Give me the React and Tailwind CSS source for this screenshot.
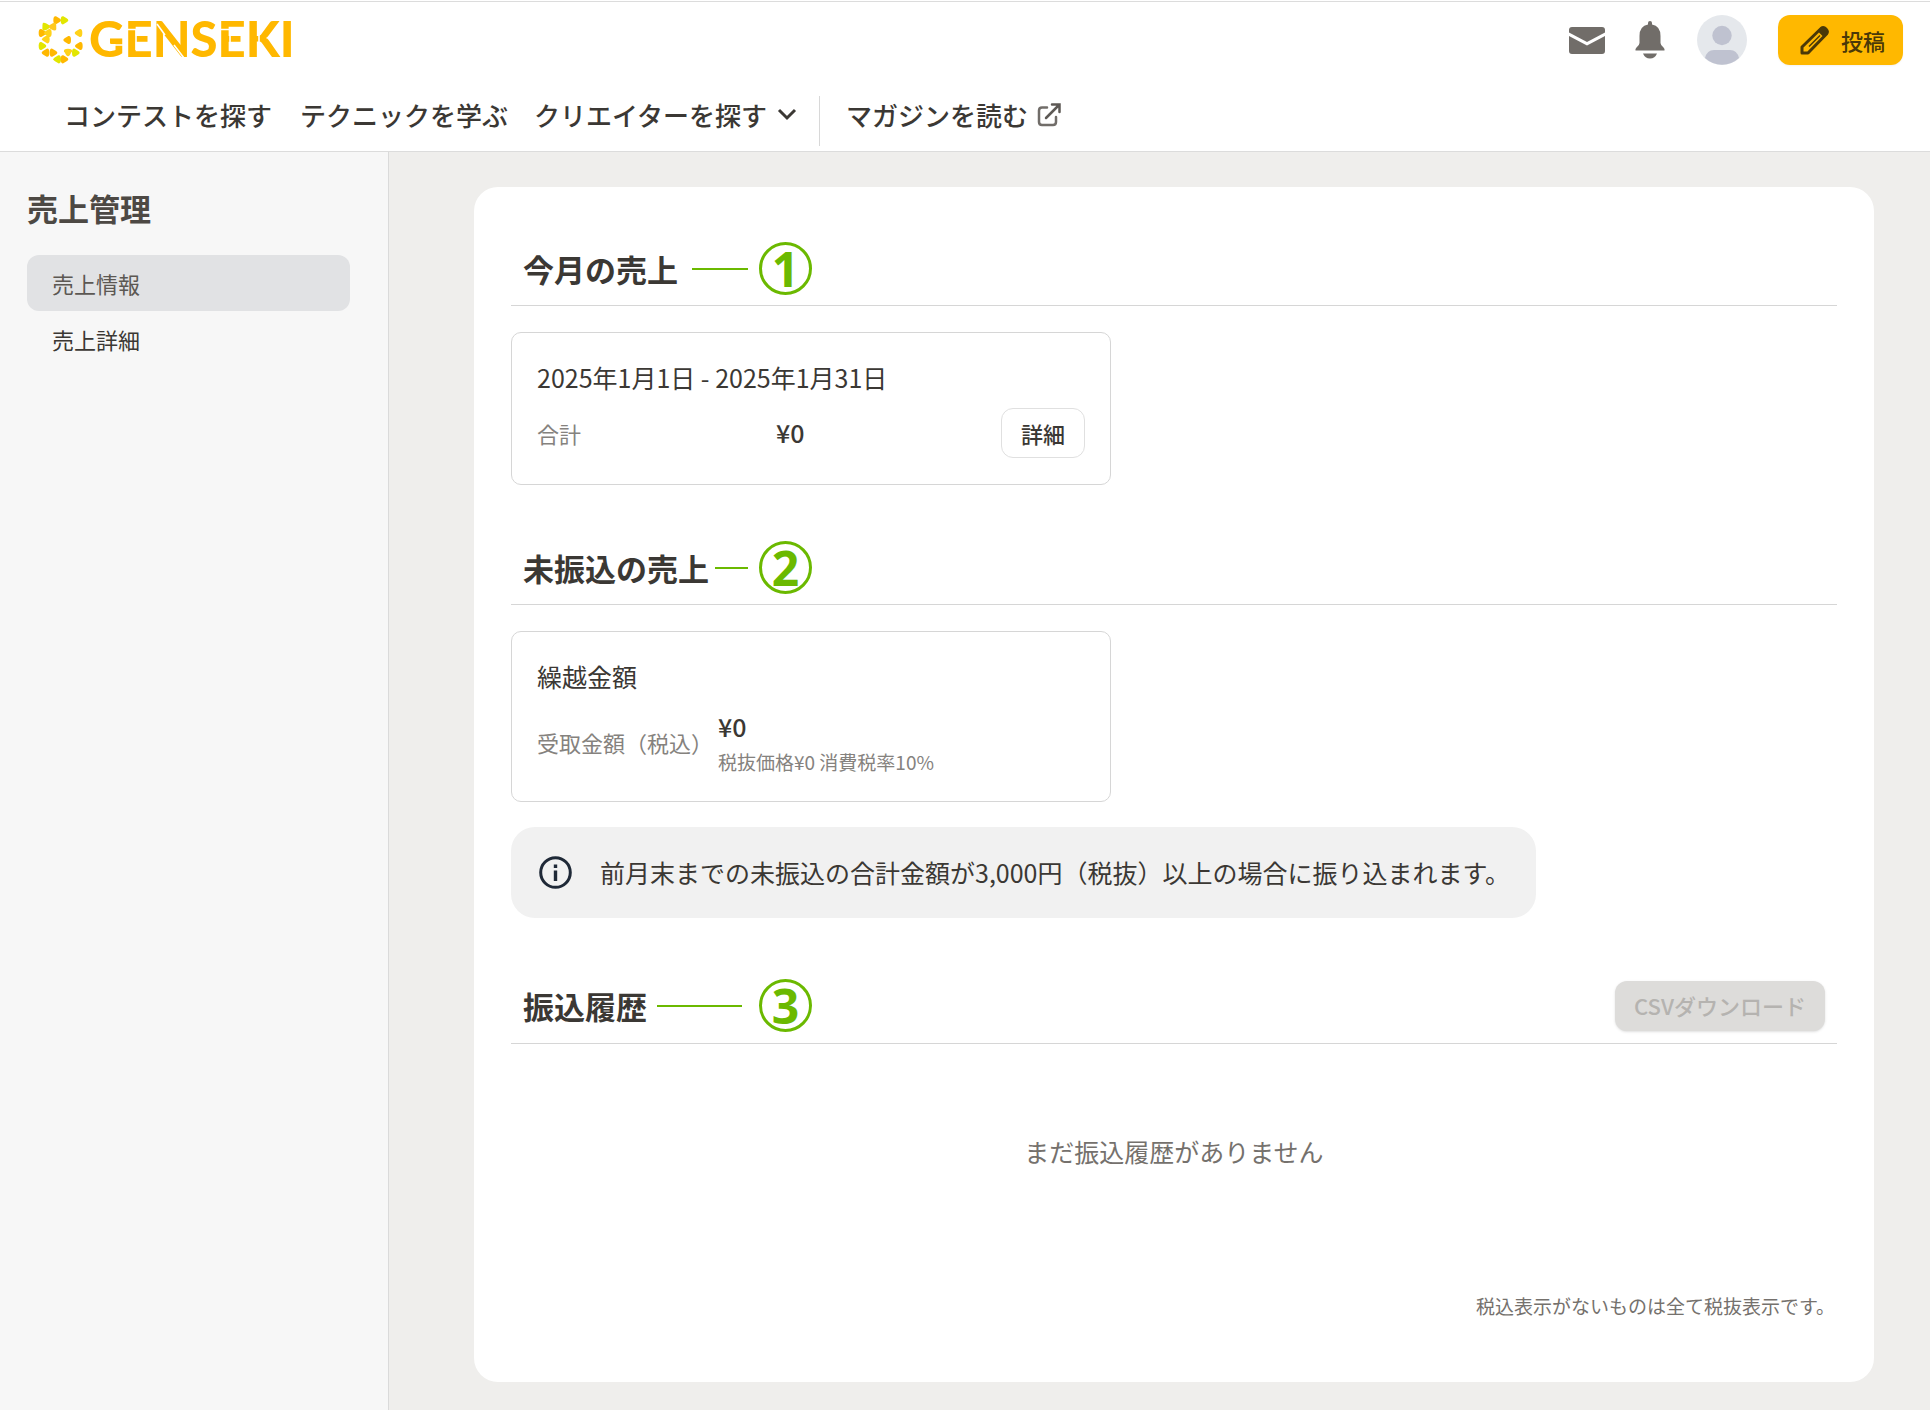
import React from "react";

const petals = [
  [111, 61, 180, "#ffb800"],
  [133, 61, 180, "#e2e600"],
  [76, 79, 60, "#e2e600"],
  [100, 79, 120, "#ffc91f"],
  [67, 99, 180, "#ffb800"],
  [84, 99, 0, "#ffd21a"],
  [67, 138, 180, "#e2e600"],
  [78, 118, 0, "#ffd21a"],
  [77, 158, 0, "#ffb800"],
  [100, 158, 180, "#ffb800"],
  [112, 178, 0, "#e2e600"],
  [133, 178, 180, "#ffb800"],
  [144, 157, 270, "#ffd21a"],
  [167, 158, 180, "#e2e600"],
  [177, 138, 0, "#ffb800"],
  [142, 120, 0, "#ffb800"],
  [176, 99, 0, "#ffd21a"],
];

function Logo() {
  return (
    <a href="#" aria-label="GENSEKI" className="block">
      <svg viewBox="0 -13 256 68" className="block h-[68px] w-[256px]">
        <g transform="translate(-18 -15) scale(0.3333)">
          {petals.map(([x, y, r, fill], i) => (
            <path
              key={i}
              transform={`translate(${x} ${y}) rotate(${r})`}
              d="M-12 0Q-12 -3 -7 -6L3 -12Q11 -14 11 0Q11 14 3 12L-7 6Q-12 3 -12 0Z"
              fill={fill}
            />
          ))}
        </g>
        <text x="51" y="42" fontFamily="Lato" fontWeight="900" fontSize="49" fill="#ffb800">
          GENSEKI
        </text>
        <path
          d="M87 14.500H98V35M181 14.500H192V35M119 9L127 20M136 30L146 43M221 6V43M76 30H87"
          fill="none"
          stroke="#fff"
          strokeWidth="1.600"
        />
      </svg>
    </a>
  );
}

function Callout({ number, lineClass }) {
  return (
    <>
      <span className={`h-[2px] flex-1 bg-[#6bb900] ${lineClass}`} />
      <span className="flex size-[53px] items-center justify-center rounded-full border-3 border-[#6bb900] font-['Open_Sans',sans-serif] text-5xl leading-none font-bold text-[#6bb900]">
        {number}
      </span>
    </>
  );
}

function SectionHeader({ title, number, lineClass, className, children }) {
  return (
    <div className={`flex items-center justify-between border-b border-[#d6d6d6] px-3 ${className}`}>
      <div className="flex w-[289px] items-center">
        <h2 className="text-[31px] leading-10 font-bold whitespace-nowrap">{title}</h2>
        <Callout number={number} lineClass={lineClass} />
      </div>
      {children}
    </div>
  );
}

export default function App() {
  return (
    <div className="flex min-h-[1410px] flex-col bg-white pt-px font-['Noto_Sans_CJK_JP',sans-serif] text-[#3b3834]">
      <header className="border-y border-[#dcdcdc]">
        <div className="flex items-start justify-between pr-[27px] pl-[38px]">
          <Logo />
          <div className="flex items-center pt-[13px]">
            <button aria-label="メッセージ" className="mr-[30px]">
              <svg viewBox="0 0 36 27" className="block h-[27px] w-9" fill="#716d69">
                <path d="M3 0H33Q36 0 36 3V5.500L18 15 0 5.500V3Q0 0 3 0Z" />
                <path d="M0 9L18 18.500 36 9V24Q36 27 33 27H3Q0 27 0 24Z" />
              </svg>
            </button>
            <button aria-label="お知らせ" className="mr-8">
              <svg viewBox="0 0 30 38" className="block h-[38px] w-[30px]" fill="#716d69">
                <path d="M15 0Q17 0 17 2V3.500Q25.500 5 25.500 15V22Q25.500 24 28.500 26.500Q30 28 29.500 29.500H.5Q0 28 1.500 26.500Q4.500 24 4.500 22V15Q4.500 5 13 3.500V2Q13 0 15 0Z" />
                <path d="M8 32.500H22Q20 37.500 15 37.500T8 32.500Z" />
              </svg>
            </button>
            <button aria-label="アカウント" className="mr-[31px]">
              <svg viewBox="0 0 50 50" className="block size-[50px]">
                <circle cx="25" cy="25" r="25" fill="#e5e8ec" />
                <circle cx="25" cy="20.500" r="9.700" fill="#bfc2d0" />
                <path d="M8 43Q10 35 17 35H33Q40 35 42 43A25 25 0 0 1 8 43Z" fill="#bfc2d0" />
              </svg>
            </button>
            <button className="flex h-[50px] items-center gap-3 rounded-xl bg-[#ffb800] pr-[18px] pl-[22px] text-[22px] leading-8 font-medium text-[#4a3808] shadow-xs">
              <svg viewBox="0 0 29 29" className="size-[29px]">
                <path
                  d="M2 27V21L21 2.500Q23.500 .5 26 3T26.500 8L8 27Z"
                  fill="none"
                  stroke="#4a3808"
                  strokeWidth="3"
                  strokeLinejoin="round"
                />
                <path d="M18 5.500L21 2.500Q23.500 .5 26 3T26.500 8L23.500 11Z" fill="#4a3808" />
                <path d="M9 20.500L20 9.500" stroke="#4a3808" strokeWidth="1.500" />
              </svg>
              投稿
            </button>
          </div>
        </div>
        <nav className="flex items-start pt-[25px] pb-[5px] pl-16 text-[26px] leading-10 font-medium">
          <a href="#" className="mr-7">コンテストを探す</a>
          <a href="#" className="mr-[26px]">テクニックを学ぶ</a>
          <button className="flex items-center gap-[10px]">
            クリエイターを探す
            <svg viewBox="0 0 20 14" className="h-[14px] w-5" fill="none" stroke="#3b3834" strokeWidth="3">
              <path d="M2 2L10 10 18 2" />
            </svg>
          </button>
          <span className="mt-px mr-[26px] ml-[22px] h-[50px] w-px bg-[#d8d8d8]" />
          <a href="#" className="flex items-center gap-[9px]">
            マガジンを読む
            <svg viewBox="0 0 24 24" className="size-6" fill="none" stroke="#716d69" strokeWidth="2.500" strokeLinecap="round" strokeLinejoin="round">
              <path d="M10 4.500H5Q2 4.500 2 7.500V19Q2 22 5 22H16Q19 22 19 19V14" />
              <path d="M9 15L22 2M15 1.500H22.500V9" stroke="#5d5955" strokeLinejoin="miter" />
            </svg>
          </a>
        </nav>
      </header>

      <div className="flex flex-1">
        <aside className="w-[389px] shrink-0 border-r border-[#dadada] bg-[#f7f7f7] pt-9 pr-[38px] pl-[27px]">
          <h1 className="text-[31px] leading-10 font-bold text-[#4d4944]">売上管理</h1>
          <nav className="mt-[27px] text-[22px]">
            <a href="#" aria-current="page" className="block rounded-xl bg-[#e1e2e4] px-[25px] py-3 leading-8 text-[#5c5853]">
              売上情報
            </a>
            <a href="#" className="block rounded-xl px-[25px] py-3 leading-8">
              売上詳細
            </a>
          </nav>
        </aside>

        <main className="flex flex-1 bg-[#efeeec] pt-[35px] pr-14 pb-7 pl-[85px]">
          <div className="flex-1 rounded-3xl bg-white px-[37px] pt-[55px] pb-[62px]">
            <section>
              <SectionHeader title="今月の売上" number="1" lineClass="ml-[14px] mr-[11px]" className="pb-[10px]" />
              <div className="mt-[26px] w-[600px] rounded-[10px] border border-[#d6d6d6] px-[25px] pt-6 pb-[26px]">
                <h3 className="text-[25px] leading-10">2025年1月1日 - 2025年1月31日</h3>
                <div className="mt-[11px] flex items-center">
                  <span className="w-[239px] text-[22px] text-[#85827e]">合計</span>
                  <span className="flex-1 text-[25px] font-medium">¥0</span>
                  <button className="h-[50px] rounded-xl border border-[#e0e0e0] px-[19px] text-[22px] font-medium">
                    詳細
                  </button>
                </div>
              </div>
            </section>

            <section className="mt-14">
              <SectionHeader title="未振込の売上" number="2" lineClass="ml-[6px] mr-[11px]" className="pb-[10px]" />
              <div className="mt-[26px] w-[600px] rounded-[10px] border border-[#d6d6d6] px-[25px] pt-6 pb-[25px]">
                <h3 className="text-[25px] leading-10">繰越金額</h3>
                <div className="mt-3 flex items-center">
                  <span className="w-[181px] text-[22px] leading-8 text-[#85827e]">受取金額（税込）</span>
                  <div>
                    <p className="text-[25px] leading-9 font-medium">¥0</p>
                    <p className="mt-1 text-[19px] leading-7 text-[#85827e]">税抜価格¥0 消費税率10%</p>
                  </div>
                </div>
              </div>
              <div className="mt-[25px] flex h-[91px] w-fit items-center gap-7 rounded-3xl bg-[#f1f1f1] pr-[26px] pl-7">
                <svg viewBox="0 0 33 33" className="size-[33px]" fill="none" stroke="#1f2937">
                  <circle cx="16.500" cy="16.500" r="14.800" strokeWidth="3" />
                  <path d="M16.500 14.500V25M16.500 8.500V12" strokeWidth="3.400" />
                </svg>
                <p className="text-[25px]">前月末までの未振込の合計金額が3,000円（税抜）以上の場合に振り込まれます。</p>
              </div>
            </section>

            <section className="mt-[61px]">
              <SectionHeader title="振込履歴" number="3" lineClass="ml-[10px] mr-[17px]" className="pb-[11px]">
                <button disabled className="h-[50px] rounded-xl bg-[#dddcda] px-[19px] text-[22px] font-medium text-[#b5b3b0] shadow-sm">
                  CSVダウンロード
                </button>
              </SectionHeader>
              <p className="mt-[87px] text-center text-[25px] leading-10 text-[#75716d]">まだ振込履歴がありません</p>
            </section>
            <p className="mt-[121px] pr-[2px] text-right text-[19px] leading-7 text-[#75716d]">
              税込表示がないものは全て税抜表示です。
            </p>
          </div>
        </main>
      </div>
    </div>
  );
}
